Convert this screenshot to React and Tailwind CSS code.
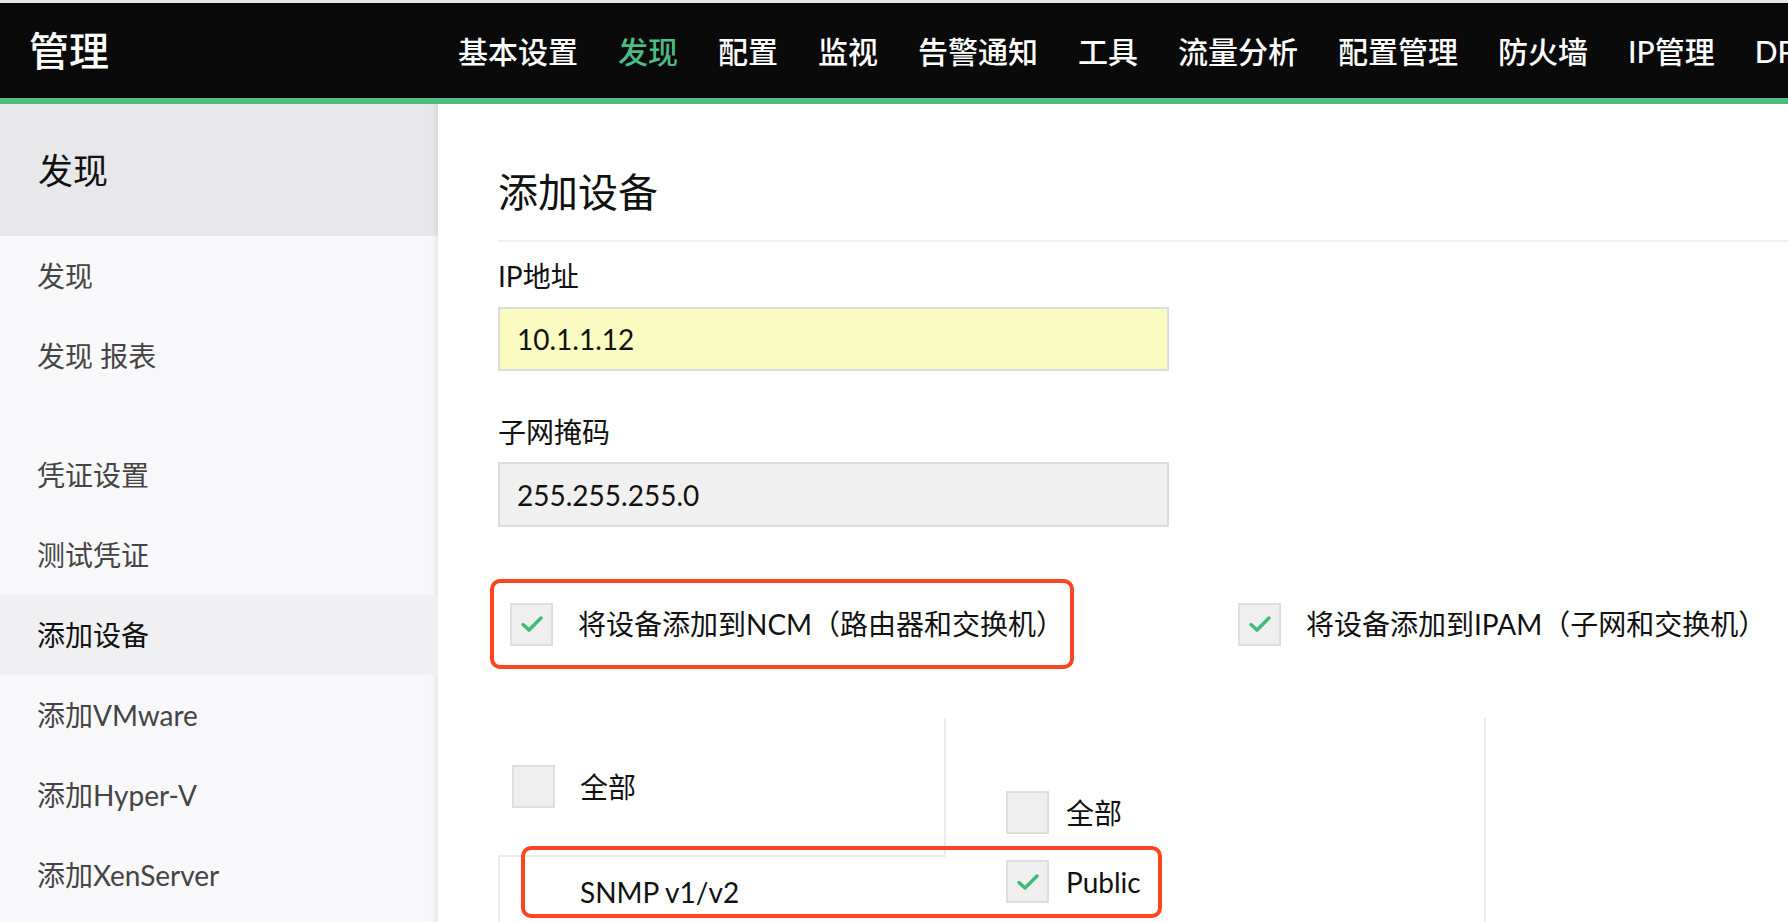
import React from 'react';

const FONT = { fontFamily: '"Lato", "Noto Sans CJK SC", sans-serif' };

const navItems = ['基本设置', '发现', '配置', '监视', '告警通知', '工具', '流量分析', '配置管理', '防火墙', 'IP管理', 'DPI'];

function CheckBox({ checked }) {
    return (
        <div className="w-[43px] h-[43px] shrink-0 bg-[#efefef] border-2 border-[#dedede] flex items-center justify-center">
            {checked && (
                <svg width="24" height="18" viewBox="0 0 24 18" fill="none">
                    <path d="M3 9.5 L9 15 L21 3" stroke="#3fbb7c" strokeWidth="3.5" strokeLinecap="round" strokeLinejoin="round" />
                </svg>
            )}
        </div>
    );
}

function SideItem({ label, active }) {
    return (
        <div className={`h-[80px] flex items-center pl-[37px] text-[28px] ${active ? 'bg-[#f0f0f2] text-[#111]' : 'text-[#444]'}`}>
            {label}
        </div>
    );
}

export default function App() {
    return (
        <div className="w-[1788px] h-[922px] overflow-hidden bg-white flex flex-col" style={FONT}>
            {/* top bar */}
            <div className="h-[3px] bg-[#e4e4e4] shrink-0" />
            <div className="h-[95px] bg-[#0a0a0a] flex items-center shrink-0 overflow-hidden">
                <div className="pl-[29px] w-[458px] shrink-0 text-white text-[40px] font-medium leading-none">管理</div>
                <nav className="flex items-center gap-[40px] whitespace-nowrap text-[30px] font-medium text-white leading-none">
                    {navItems.map((item) => (
                        <span key={item} className={item === '发现' ? 'text-[#4cbb84]' : ''}>{item}</span>
                    ))}
                </nav>
            </div>
            <div className="h-[6px] bg-[#4cbb84] shrink-0" />

            <div className="flex flex-1 min-h-0">
                {/* sidebar */}
                <aside className="w-[438px] shrink-0 bg-[#f8f8fa] shadow-[inset_-10px_0_10px_-10px_rgba(0,0,0,0.12)]">
                    <div className="h-[132px] bg-[#e8e8ea] flex items-center pl-[38px] text-[35px] text-[#111] shadow-[inset_-10px_0_10px_-10px_rgba(0,0,0,0.12)]">
                        发现
                    </div>
                    <SideItem label="发现" />
                    <SideItem label="发现 报表" />
                    <div className="h-[39px]" />
                    <SideItem label="凭证设置" />
                    <SideItem label="测试凭证" />
                    <SideItem label="添加设备" active />
                    <SideItem label="添加VMware" />
                    <SideItem label="添加Hyper-V" />
                    <SideItem label="添加XenServer" />
                </aside>

                {/* main */}
                <main className="flex-1 pl-[60px] text-[#111]">
                    <div className="pt-[64px] pb-[24px] border-b-2 border-[#efefef]">
                        <h1 className="text-[40px] leading-[48px]">添加设备</h1>
                    </div>

                    <div className="mt-[16px] text-[28px] leading-[36px]">IP地址</div>
                    <div className="mt-[13px] w-[671px] h-[64px] bg-[#f9fbc0] border-2 border-[#dcdcdc] flex items-center pl-[17px] text-[28px]">
                        10.1.1.12
                    </div>

                    <div className="mt-[43px] text-[28px] leading-[36px]">子网掩码</div>
                    <div className="mt-[12px] w-[671px] h-[65px] bg-[#f0f0f0] border-2 border-[#dcdcdc] flex items-center pl-[17px] text-[28px]">
                        255.255.255.0
                    </div>

                    <div className="mt-[52px] flex items-center">
                        <div className="-ml-[8px] w-[584px] h-[90px] border-4 border-[#ff4520] rounded-[10px] flex items-center pl-[16px] gap-[25px]">
                            <CheckBox checked />
                            <span className="text-[28px] whitespace-nowrap">将设备添加到NCM（路由器和交换机）</span>
                        </div>
                        <div className="ml-[164px] flex items-center gap-[25px]">
                            <CheckBox checked />
                            <span className="text-[28px] whitespace-nowrap">将设备添加到IPAM（子网和交换机）</span>
                        </div>
                    </div>

                    <div className="relative mt-[49px] flex">
                        <div className="w-[448px] shrink-0 flex flex-col">
                            <div className="h-[137px] border-r-2 border-[#ececec] flex items-center pl-[14px] gap-[25px]">
                                <CheckBox />
                                <span className="text-[28px]">全部</span>
                            </div>
                            <div className="h-[72px] border-t-2 border-l-2 border-[#ececec] flex items-center pl-[80px] text-[28px]">
                                SNMP v1/v2
                            </div>
                        </div>
                        <div className="w-[540px] border-r-2 border-[#ececec] pl-[60px] pt-[73px] flex flex-col gap-[26px]">
                            <div className="flex items-center gap-[17px]">
                                <CheckBox />
                                <span className="text-[28px]">全部</span>
                            </div>
                            <div className="flex items-center gap-[17px]">
                                <CheckBox checked />
                                <span className="text-[28px]">Public</span>
                            </div>
                        </div>
                        <div className="absolute left-[23px] top-[128px] w-[641px] h-[72px] border-4 border-[#ff4520] rounded-[10px]" />
                    </div>
                </main>
            </div>
        </div>
    );
}
